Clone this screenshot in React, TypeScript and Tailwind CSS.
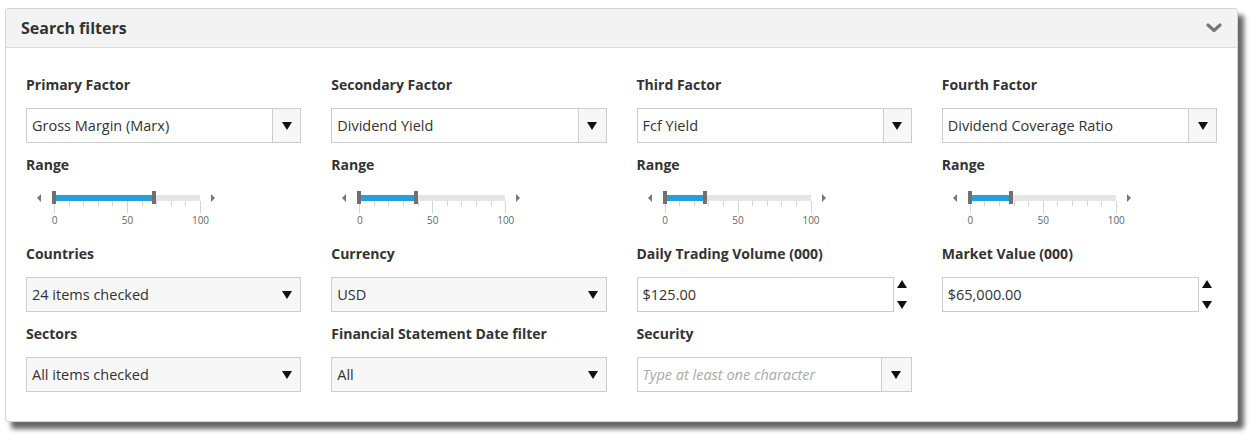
import React from "react";

const font = { fontFamily: '"Open Sans", "Noto Sans", sans-serif' };

const Caret = ({ up = false }: { up?: boolean }) => (
  <svg width="10" height="8" viewBox="0 0 10 8" className={up ? "rotate-180" : ""}>
    <path d="M0 0 L10 0 L5 8 Z" fill="#111" />
  </svg>
);

const Chevron = () => (
  <svg width="16" height="10" viewBox="0 0 16 10">
    <path d="M2 2 L8 7.5 L14 2" fill="none" stroke="#777" strokeWidth="3.2" strokeLinecap="round" strokeLinejoin="round" />
  </svg>
);

const Label = ({ children }: { children: React.ReactNode }) => (
  <div className="h-[20px] text-[14px] leading-[20px] font-bold text-[#333]">{children}</div>
);

const ComboBox = ({ value }: { value: string }) => (
  <div className="mt-[13px] flex h-[35px] border border-[#ccc] bg-white">
    <div className="flex flex-1 items-center pl-[5px] text-[14.5px] text-[#333]">{value}</div>
    <div className="flex w-[28px] items-center justify-center border-l border-[#ccc] bg-[#f7f7f7]">
      <Caret />
    </div>
  </div>
);

const DropDown = ({ value }: { value: string }) => (
  <div className="mt-[13px] flex h-[35px] items-center justify-between border border-[#ccc] bg-[#f7f7f7] pl-[5px] pr-[8px]">
    <span className="text-[14.5px] text-[#333]">{value}</span>
    <Caret />
  </div>
);

const Numeric = ({ value }: { value: string }) => (
  <div className="mt-[13px] flex h-[35px]">
    <div className="flex flex-1 items-center border border-[#ccc] bg-white pl-[5px] text-[14.5px] text-[#333]">
      {value}
    </div>
    <div className="flex w-[18px] flex-col items-start justify-between py-[3px] pl-[3px]">
      <Caret up />
      <Caret />
    </div>
  </div>
);

const Slider = ({ value }: { value: number }) => {
  const ticks = [0, 10, 20, 30, 40, 50, 60, 70, 80, 90, 100];
  const pos = (v: number) => 28 + (v * 146) / 100;
  return (
    <div className="relative h-[57px] w-[200px]">
      {/* arrows */}
      <div className="absolute left-[11px] top-[19px] h-0 w-0 border-y-[4px] border-r-[4px] border-y-transparent border-r-[#777]" />
      <div className="absolute left-[185px] top-[19px] h-0 w-0 border-y-[4px] border-l-[4px] border-y-transparent border-l-[#777]" />
      {/* track */}
      <div className="absolute left-[28px] top-[20px] h-[6px] w-[146px] bg-[#e5e5e5]" />
      <div
        className="absolute top-[20px] h-[6px] bg-[#26a0da]"
        style={{ left: pos(0) + 2, width: pos(value) - pos(0) - 4 }}
      />
      {ticks.map((t) => (
        <div
          key={t}
          className="absolute top-[26px] w-px bg-[#d4d4d4]"
          style={{ left: pos(t), height: t % 50 === 0 ? 12 : 5 }}
        />
      ))}
      {/* handles */}
      <div className="absolute top-[16px] h-[13px] w-[4px] bg-[#707070]" style={{ left: pos(0) - 2 }} />
      <div className="absolute top-[16px] h-[13px] w-[4px] bg-[#707070]" style={{ left: pos(value) - 2 }} />
      {[0, 50, 100].map((t) => (
        <span
          key={t}
          className="absolute top-[39px] w-[30px] -translate-x-1/2 text-center text-[10px] leading-[12px] text-[#666]"
          style={{ left: pos(t) + 0.5 }}
        >
          {t}
        </span>
      ))}
    </div>
  );
};

const factors = [
  { label: "Primary Factor", value: "Gross Margin (Marx)", range: 68.5 },
  { label: "Secondary Factor", value: "Dividend Yield", range: 39 },
  { label: "Third Factor", value: "Fcf Yield", range: 28 },
  { label: "Fourth Factor", value: "Dividend Coverage Ratio", range: 28 },
];

export default function App() {
  return (
    <div className="h-[442px] w-[1256px] bg-white pl-[5px] pt-[8px]" style={font}>
      <div className="w-[1233px] rounded-[3px] border border-[#d6d6d6] bg-white shadow-[6px_7px_5px_rgba(0,0,0,0.6)]">
        <div className="flex h-[39px] items-center justify-between rounded-t-[3px] border-b border-[#dcdcdc] bg-[#f3f3f3] pl-[15px] pr-[15px]">
          <span className="text-[16px] font-bold text-[#333]">Search filters</span>
          <Chevron />
        </div>
        <div className="grid grid-cols-4 gap-x-[30px] gap-y-[12px] px-[20px] pb-[29px] pt-[27px]">
          {factors.map((f) => (
            <div key={f.label}>
              <Label>{f.label}</Label>
              <ComboBox value={f.value} />
              <div className="mt-[12px]">
                <Label>Range</Label>
              </div>
              <Slider value={f.range} />
            </div>
          ))}

          <div>
            <Label>Countries</Label>
            <DropDown value="24 items checked" />
          </div>
          <div>
            <Label>Currency</Label>
            <DropDown value="USD" />
          </div>
          <div>
            <Label>Daily Trading Volume (000)</Label>
            <Numeric value="$125.00" />
          </div>
          <div>
            <Label>Market Value (000)</Label>
            <Numeric value="$65,000.00" />
          </div>

          <div>
            <Label>Sectors</Label>
            <DropDown value="All items checked" />
          </div>
          <div>
            <Label>Financial Statement Date filter</Label>
            <DropDown value="All" />
          </div>
          <div>
            <Label>Security</Label>
            <div className="mt-[13px] flex h-[35px] border border-[#ccc] bg-white">
              <div className="flex flex-1 items-center pl-[5px] text-[14.5px] italic text-[#aaa]">
                Type at least one character
              </div>
              <div className="flex w-[30px] items-center justify-center border-l border-[#ccc] bg-[#f7f7f7]">
                <Caret />
              </div>
            </div>
          </div>
          <div />
        </div>
      </div>
    </div>
  );
}
